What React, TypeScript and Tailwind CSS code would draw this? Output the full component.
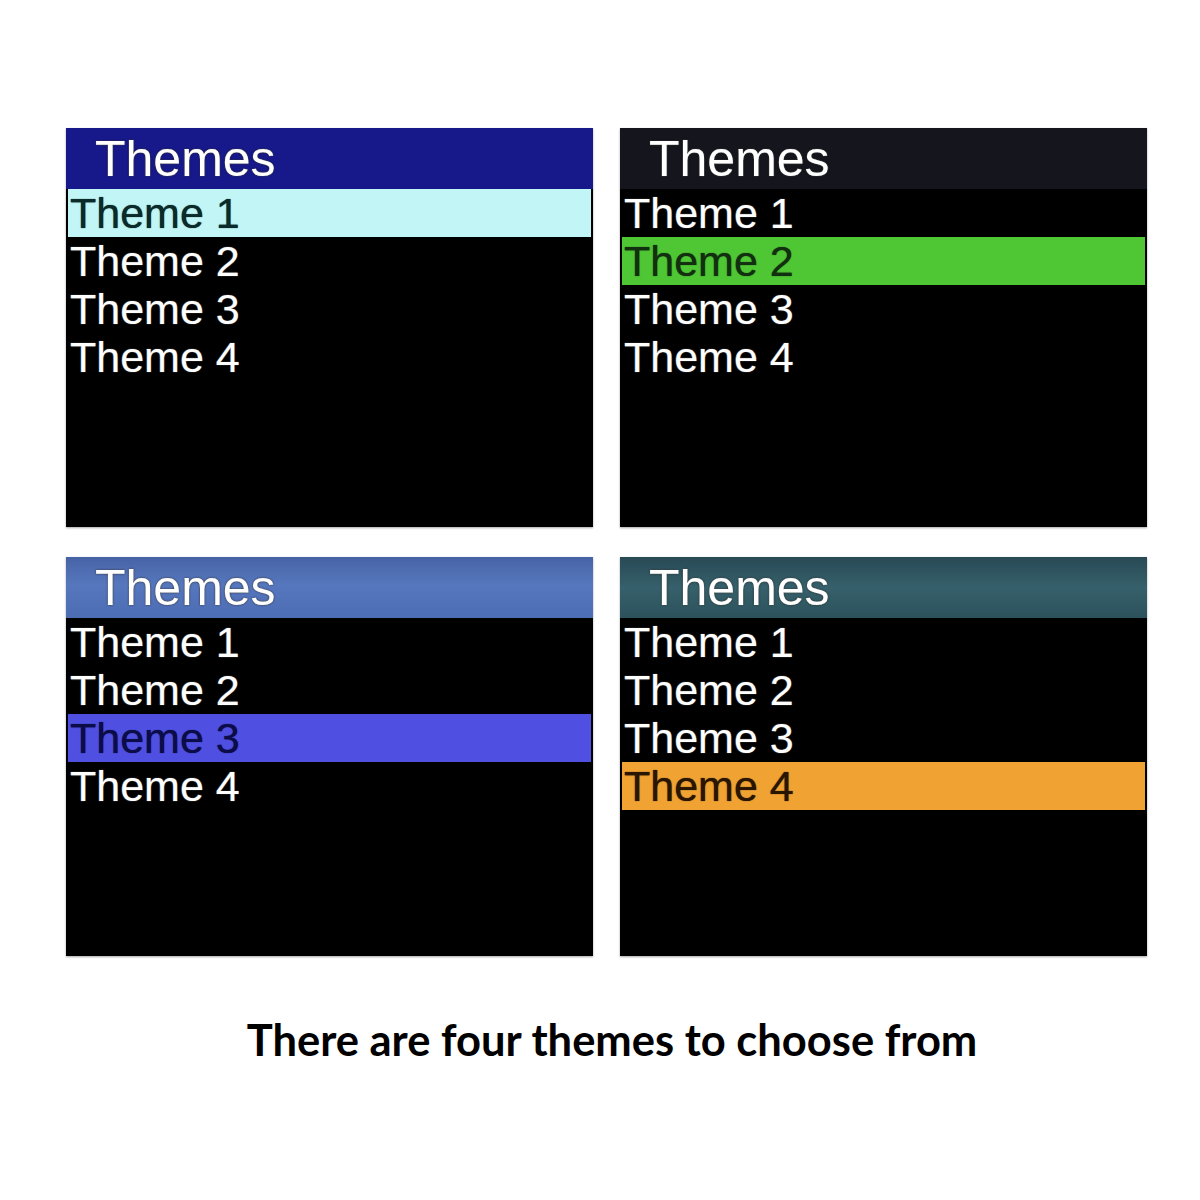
import React from 'react';

type Scheme = {
  header: string;
  highlight: string;
  highlightText: string;
  selected: number;
};

const schemes: Scheme[] = [
  {
    header: 'bg-[#17198a]',
    highlight: 'bg-[#c2f6f6]',
    highlightText: 'text-[#0b2a2a]',
    selected: 0,
  },
  {
    header: 'bg-[#15151d]',
    highlight: 'bg-[#4fc634]',
    highlightText: 'text-[#123010]',
    selected: 1,
  },
  {
    header: 'bg-[linear-gradient(180deg,#4763a6_0%,#5677bd_45%,#4c6cb4_100%)]',
    highlight: 'bg-[#4f50e2]',
    highlightText: 'text-[#0c0c48]',
    selected: 2,
  },
  {
    header: 'bg-[linear-gradient(180deg,#284a55_0%,#36606b_50%,#2c525c_100%)]',
    highlight: 'bg-[#f0a233]',
    highlightText: 'text-[#2a1600]',
    selected: 3,
  },
];

const items = ['Theme 1', 'Theme 2', 'Theme 3', 'Theme 4'];

function ThemeMenu({ scheme }: { scheme: Scheme }) {
  return (
    <div className="h-[399px] bg-black flex flex-col shadow-[0_1px_2px_rgba(0,0,0,0.35)] font-['Liberation_Sans',Arial,sans-serif]">
      <div className={`h-[61px] flex items-center pl-[29px] ${scheme.header}`}>
        <span className="text-[50px] leading-none text-white [text-shadow:0_0_2px_#000,0_0_1px_#fff]">
          Themes
        </span>
      </div>
      <div className="flex flex-col">
        {items.map((label, i) => {
          const active = i === scheme.selected;
          return (
            <div
              key={label}
              className={`h-[48px] flex items-center mx-[2px] pl-[2px] ${active ? scheme.highlight : ''}`}
            >
              <span
                className={`text-[43px] leading-none ${
                  active
                    ? `${scheme.highlightText} [text-shadow:0_0_1px_currentColor]`
                    : 'text-white [text-shadow:0_0_2px_#000,0_0_1px_#fff]'
                }`}
              >
                {label}
              </span>
            </div>
          );
        })}
      </div>
    </div>
  );
}

export default function App() {
  return (
    <div className="w-[1200px] h-[1200px] bg-white flex flex-col">
      <div className="pt-[128px] pl-[66px] grid grid-cols-[527px_527px] gap-x-[27px] gap-y-[30px]">
        {schemes.map((s, i) => (
          <ThemeMenu key={i} scheme={s} />
        ))}
      </div>
      <p className="mt-[62px] pl-[24px] text-center text-[43.5px] font-bold text-black font-['Lato',sans-serif] leading-none">
        There are four themes to choose from
      </p>
    </div>
  );
}
